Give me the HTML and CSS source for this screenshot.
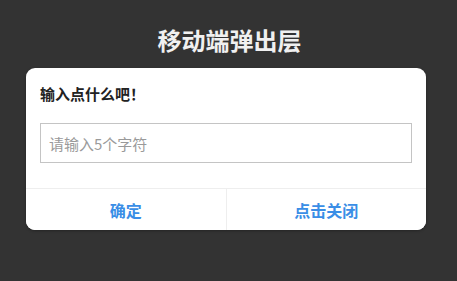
FILE: index.html
```html
<!DOCTYPE html>
<html lang="zh">
<head>
<meta charset="utf-8">
<link rel="stylesheet" href="styles.css">
</head>
<body>
<div class="page">
  <h1 class="page-title">移动端弹出层</h1>
  <div class="dialog">
    <div class="dialog-head">输入点什么吧！</div>
    <div class="dialog-body">
      <input class="dialog-input" type="text" placeholder="请输入5个字符">
    </div>
    <div class="dialog-foot">
      <button class="dialog-btn">确定</button>
      <button class="dialog-btn">点击关闭</button>
    </div>
  </div>
</div>
</body>
</html>
```
FILE: styles.css
```css
html, body {
  margin: 0;
  padding: 0;
  background: #333333;
  font-family: "Noto Sans CJK SC", "Liberation Sans", sans-serif;
}
.page {
  width: 457px;
  height: 281px;
  padding-top: 23px;
  box-sizing: border-box;
}
.page-title {
  margin: 0;
  height: 33px;
  line-height: 33px;
  font-size: 24px;
  font-weight: bold;
  color: #f0f0f0;
  text-align: center;
  padding-left: 2px;
}
.dialog {
  margin: 12px 0 0 26px;
  width: 400px;
  background: #ffffff;
  border-radius: 9px;
  overflow: hidden;
  box-shadow: 0 1px 3px rgba(0,0,0,0.3);
}
.dialog-head {
  padding: 16px 14px 0;
  height: 20px;
  line-height: 20px;
  font-size: 15px;
  font-weight: bold;
  color: #222;
}
.dialog-body {
  padding: 19px 14px 25px;
}
.dialog-input {
  display: block;
  width: 100%;
  height: 40px;
  box-sizing: border-box;
  border: 1px solid #c4c4c4;
  padding: 0 8px;
  font-size: 15px;
  font-family: "Noto Sans CJK SC", "Liberation Sans", sans-serif;
  outline: none;
  border-radius: 0;
}
.dialog-input::placeholder {
  color: #9a9a9a;
}
.dialog-foot {
  display: flex;
  border-top: 1px solid #eeeeee;
}
.dialog-btn {
  flex: 1;
  height: 41px;
  border: none;
  background: #fff;
  color: #3a8ee6;
  font-size: 16px;
  font-weight: bold;
  font-family: "Noto Sans CJK SC", "Liberation Sans", sans-serif;
  padding: 0;
}
.dialog-btn + .dialog-btn {
  border-left: 1px solid #eeeeee;
}
```
